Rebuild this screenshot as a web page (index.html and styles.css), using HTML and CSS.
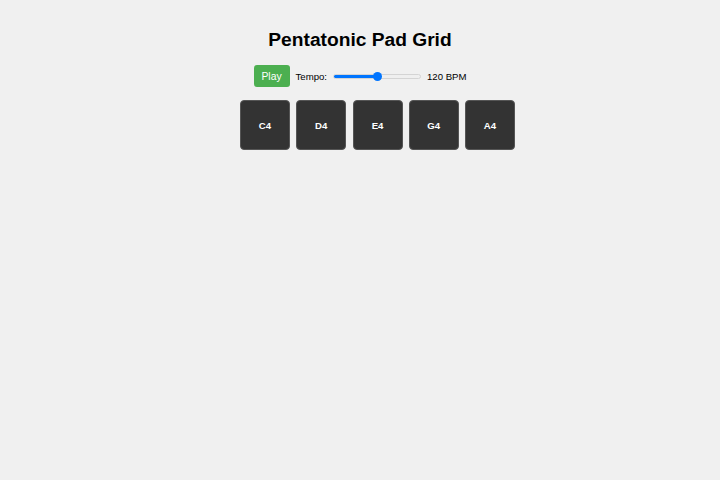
FILE: index.html
```html
<!DOCTYPE html>
<html>
<head>
    <meta charset="UTF-8">
    <title>Pentatonic Pad Grid</title>
    <link rel="stylesheet" href="styles.css">
</head>
<body>
    <h1>Pentatonic Pad Grid</h1>
    <div class="controls">
        <button type="button" class="play-btn">Play</button>
        <label for="tempo">Tempo:</label>
        <input type="range" id="tempo" min="60" max="180" value="120">
        <span id="bpm">120 BPM</span>
    </div>
    <div class="grid">
        <div class="pad">C4</div>
        <div class="pad">D4</div>
        <div class="pad">E4</div>
        <div class="pad">G4</div>
        <div class="pad">A4</div>
    </div>
</body>
</html>
```

FILE: styles.css
```css
body {
    background-color: #F0F0F0;
    font-family: "Liberation Sans", Arial, sans-serif;
    margin: 0;
    padding: 20px;
    display: flex;
    flex-direction: column;
    align-items: center;
}

h1 {
    font-size: 19.2px;
    line-height: 24px;
    margin: 8px 0 13px 0;
    color: #000000;
}

.controls {
    display: flex;
    align-items: center;
    gap: 6px;
    font-size: 9.6px;
    margin-bottom: 13px;
}

.play-btn {
    background-color: #4CAF50;
    color: #FFFFFF;
    border: none;
    border-radius: 3px;
    font-family: inherit;
    font-size: 10.4px;
    padding: 0;
    height: 22px;
    width: 36px;
    cursor: pointer;
}

#tempo {
    -webkit-appearance: none;
    appearance: none;
    box-sizing: border-box;
    width: 88px;
    height: 5px;
    margin: 0;
    border: 1px solid #D4D4D4;
    border-radius: 3px;
    background: linear-gradient(to right, #0075FF 50%, #EFEFEF 50%);
}

#tempo::-webkit-slider-thumb {
    -webkit-appearance: none;
    width: 9px;
    height: 9px;
    border-radius: 50%;
    background-color: #0075FF;
    border: none;
}

.grid {
    width: 240px;
    display: grid;
    grid-template-columns: repeat(5, 50px);
    gap: 6.25px;
}

.pad {
    width: 50px;
    height: 50px;
    box-sizing: border-box;
    background-color: #333333;
    border: 1px solid #555555;
    border-radius: 4px;
    color: #FFFFFF;
    font-weight: bold;
    font-size: 9.6px;
    display: flex;
    align-items: center;
    justify-content: center;
}
```
